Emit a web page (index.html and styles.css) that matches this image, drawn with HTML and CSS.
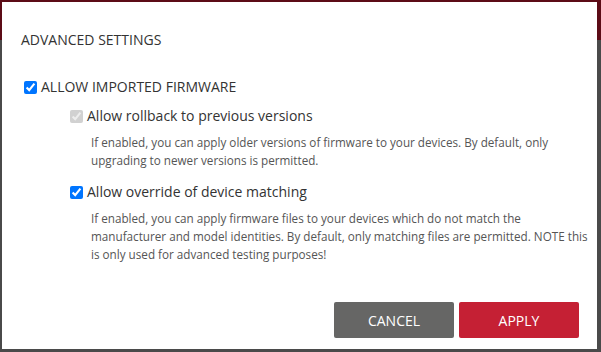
FILE: index.html
```html
<!doctype html>
<html lang="en">
  <head>
    <meta charset="UTF-8" />
    <meta name="viewport" content="width=device-width, initial-scale=1.0" />
    <title>Advanced Settings</title>
    <link rel="stylesheet" href="styles.css">
  </head>
  <body>
    <div class="backdrop">
      <div class="app-header"></div>
    </div>

    <!-- Advanced settings dialog -->
    <div class="dialog">
      <h2 class="dialog-title">Advanced Settings</h2>

      <label class="option option-main">
        <input type="checkbox" checked />
        <span>Allow imported firmware</span>
      </label>

      <div class="sub-options">
        <div class="sub-option">
          <label class="option">
            <input type="checkbox" checked disabled />
            <span>Allow rollback to previous versions</span>
          </label>
          <p class="hint">
            If enabled, you can apply older versions of firmware to your devices. By default, only
            upgrading to newer versions is permitted.
          </p>
        </div>
        <div class="sub-option">
          <label class="option">
            <input type="checkbox" checked />
            <span>Allow override of device matching</span>
          </label>
          <p class="hint">
            If enabled, you can apply firmware files to your devices which do not match the
            manufacturer and model identities. By default, only matching files are permitted. NOTE this
            is only used for advanced testing purposes!
          </p>
        </div>
      </div>

      <div class="dialog-actions">
        <button class="btn btn-cancel">Cancel</button>
        <button class="btn btn-apply">Apply</button>
      </div>
    </div>
  </body>
</html>
```

FILE: styles.css
```css
body {
  font-family: 'Open Sans', 'Liberation Sans', sans-serif;
  margin: 0;
  width: 601px;
  height: 352px;
  overflow: hidden;
  color: #333;
}

.backdrop {
  height: 352px;
  background: #4a4a4a;
}

.app-header {
  height: 40px;
  background: #5c0c17;
}

.dialog {
  position: absolute;
  top: 2px;
  left: 2px;
  width: 595px;
  height: 347px;
  box-sizing: border-box;
  background: #fff;
  padding: 28px 4px 11px 19px;
  display: flex;
  flex-direction: column;
}

.dialog-title {
  margin: 0;
  font-size: 14px;
  line-height: 20px;
  font-weight: normal;
  text-transform: uppercase;
  color: #333;
}

.option {
  display: flex;
  align-items: center;
  font-size: 14px;
  line-height: 20px;
  color: #333;
}

.option input {
  width: 13px;
  height: 13px;
  margin: 0 4px 0 0;
}

.option-main {
  margin-top: 27px;
  margin-left: 3px;
  text-transform: uppercase;
}

.sub-options {
  padding-left: 49px;
}

.sub-option {
  margin-top: 9px;
}

.sub-option + .sub-option {
  margin-top: 13px;
}

.hint {
  margin: 7px 0 0 21px;
  font-size: 11.7px;
  line-height: 18px;
  color: #555;
}

.dialog-actions {
  margin-top: auto;
  margin-right: 14px;
  display: flex;
  justify-content: flex-end;
  gap: 5px;
}

.btn {
  width: 120px;
  height: 36px;
  border: none;
  border-radius: 2px;
  color: #fff;
  font-family: inherit;
  font-size: 14px;
  text-transform: uppercase;
}

.btn-cancel {
  background: #666665;
}

.btn-apply {
  background: #c52034;
}
```
